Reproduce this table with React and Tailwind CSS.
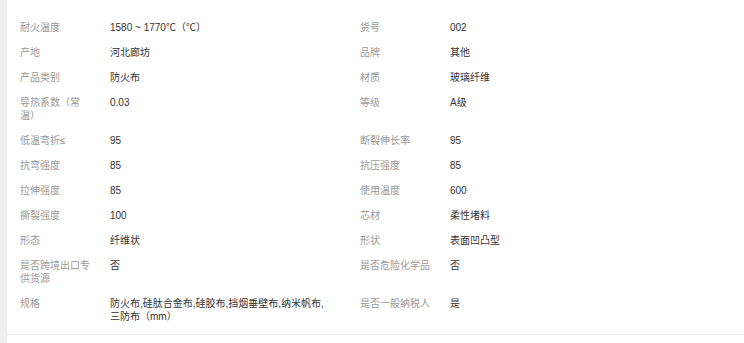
import React from 'react';

const rows = [
  ['耐火温度', '1580 ~ 1770℃（℃）', '货号', '002'],
  ['产地', '河北廊坊', '品牌', '其他'],
  ['产品类别', '防火布', '材质', '玻璃纤维'],
  ['导热系数（常温）', '0.03', '等级', 'A级'],
  ['低温弯折≤', '95', '断裂伸长率', '95'],
  ['抗弯强度', '85', '抗压强度', '85'],
  ['拉伸强度', '85', '使用温度', '600'],
  ['撕裂强度', '100', '芯材', '柔性堵料'],
  ['形态', '纤维状', '形状', '表面凹凸型'],
  ['是否跨境出口专供货源', '否', '是否危险化学品', '否'],
  ['规格', '防火布,硅肽合金布,硅胶布,挡烟垂壁布,纳米帆布,三防布（mm）', '是否一般纳税人', '是'],
];

const App = () => {
  return (
    <div
      className="flex w-[744px] h-[343px] bg-white"
      style={{ fontFamily: '"Liberation Sans", "Noto Sans CJK SC", sans-serif' }}
    >
      <div className="w-[7px] shrink-0 bg-[#efefef]" />
      <div className="flex-1 flex flex-col">
        <div className="grid grid-cols-[90px_250px_90px_1fr] pl-[13px] pt-[15px] pb-[5px] border-b border-[#e6e6e6] text-[10px] leading-[13px]">
          {rows.map((row) => (
            <React.Fragment key={row[0]}>
              <div className="py-[6px] pr-[18px] text-[#999999]">{row[0]}</div>
              <div className="py-[6px] pr-[28px] text-[#333333]">{row[1]}</div>
              <div className="py-[6px] pr-[18px] text-[#999999]">{row[2]}</div>
              <div className="py-[6px] text-[#333333]">{row[3]}</div>
            </React.Fragment>
          ))}
        </div>
      </div>
    </div>
  );
};

export default App;
